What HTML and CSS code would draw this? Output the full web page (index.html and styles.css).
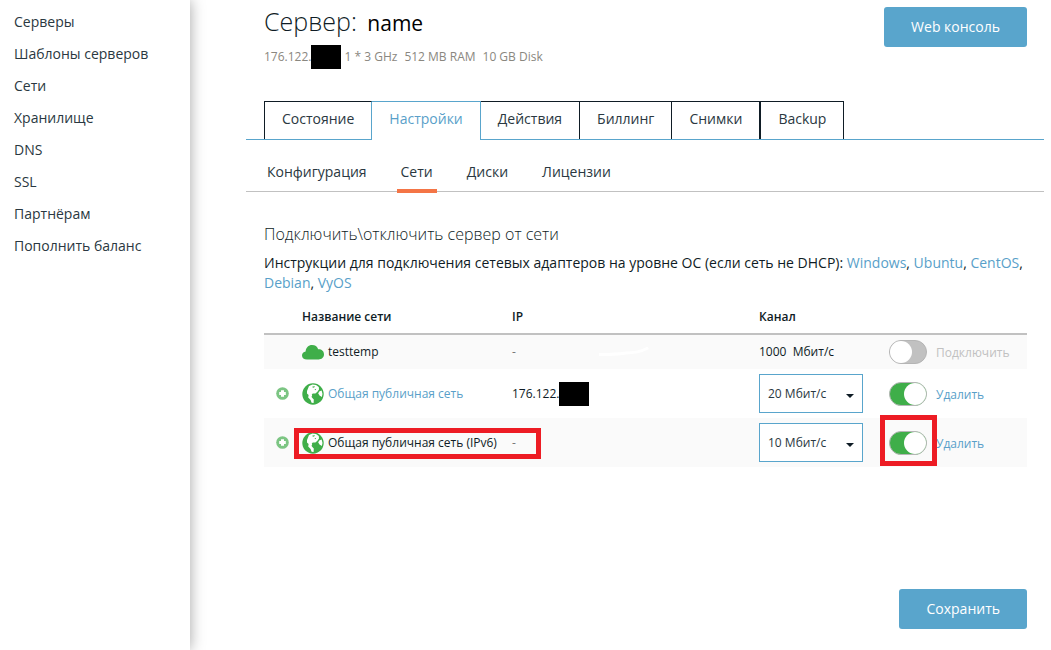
FILE: index.html
```html
<!DOCTYPE html>
<html lang="ru">
<head>
<meta charset="utf-8">
<meta name="viewport" content="width=device-width, initial-scale=1">
<title>Сервер: name</title>
<link rel="stylesheet" href="styles.css">
</head>
<body>
<svg class="sprite" aria-hidden="true">
  <symbol id="globe" viewBox="0 0 22 22">
    <circle cx="11" cy="11" r="10.700" fill="#3fae49"/>
    <path d="M7 3 L10.500 1.600 L14 2 L16.800 4 L17 6.600 L15.400 8.800 L13.400 10.400 L10.800 10.400 L9.800 11.600 L10.200 13 L9.400 13.800 L10.600 15.200 L11.800 16.400 L11.600 20 L9.600 19.800 L8.600 17 L6.200 14.600 L6.600 12 L5 10.600 L5 8 L6 5.600 Z" fill="#fff"/>
    <path d="M17.200 8.400 L19.600 7.600 L20.500 11 L19.800 14 L17.600 12.600 L16.200 10.600 Z" fill="#fff"/>
    <path d="M10.400 3.400 L13 3.200 L12.200 4.600 L10.800 4.800 Z M12.400 6.400 L14.200 5.800 L13.600 7.200 Z" fill="#3fae49"/>
  </symbol>
  <symbol id="plus" viewBox="0 0 13 13">
    <circle cx="6.5" cy="6.5" r="6.3" fill="#7cc583"/>
    <path d="M5 3.2h3V5h1.8v3H8v1.8H5V8H3.2V5H5z" fill="#fff"/>
  </symbol>
</svg>
<div class="page">
  <nav class="sidebar">
    <a href="#">Серверы</a>
    <a href="#">Шаблоны серверов</a>
    <a href="#">Сети</a>
    <a href="#">Хранилище</a>
    <a href="#">DNS</a>
    <a href="#">SSL</a>
    <a href="#">Партнёрам</a>
    <a href="#">Пополнить баланс</a>
  </nav>
  <main class="main">
    <header class="head">
      <div>
        <h1>Сервер: <span class="server-name">name</span></h1>
        <p class="specs"><span>176.122.</span><span class="mask"></span><span class="cpu">1 * 3 GHz</span><span>512 MB RAM</span><span>10 GB Disk</span></p>
      </div>
      <button type="button" class="button">Web консоль</button>
    </header>
    <nav class="tabs">
      <a href="#">Состояние</a>
      <a href="#" class="active">Настройки</a>
      <a href="#">Действия</a>
      <a href="#">Биллинг</a>
      <a href="#">Снимки</a>
      <a href="#">Backup</a>
    </nav>
    <nav class="subtabs">
      <a href="#">Конфигурация</a>
      <a href="#" class="active">Сети</a>
      <a href="#">Диски</a>
      <a href="#">Лицензии</a>
    </nav>
    <form class="content">
      <h2>Подключить\отключить сервер от сети</h2>
      <p class="help">Инструкции для подключения сетевых адаптеров на уровне ОС (если сеть не DHCP): <a href="#">Windows</a>, <a href="#">Ubuntu</a>, <a href="#">CentOS</a>, <a href="#">Debian</a>, <a href="#">VyOS</a></p>
      <table class="networks">
        <colgroup><col class="c-add"><col class="c-name"><col class="c-ip"><col class="c-speed"><col class="c-state"></colgroup>
        <thead>
          <tr><th></th><th>Название сети</th><th>IP</th><th>Канал</th><th></th></tr>
        </thead>
        <tbody>
          <tr class="shaded">
            <td></td>
            <td><div class="net"><svg class="net-icon" viewBox="0 0 22 22"><path d="M5 18.5C2 18.5 0 17 0 14.5c0-2.2 1.600-3.800 3.600-4C4 6.500 6.500 4 10 4c3.200 0 5.400 1.600 6.200 4.200C19.600 8 22 10 22 13.300c0 3.200-2.400 5.200-5.400 5.200z" fill="#3fae49"/></svg>testtemp</div></td>
            <td class="dash">- <svg class="stroke" viewBox="0 0 50 9"><path d="M1 7.500 C12 7.500 20 7 27 6 C37 6 43 4 48 1.500" fill="none" stroke="#fff" stroke-width="3" stroke-linecap="round"/></svg></td>
            <td>1000&nbsp; Мбит/с</td>
            <td><label class="toggle off"><input type="checkbox"><span>Подключить</span></label></td>
          </tr>
          <tr class="tall">
            <td><button type="button" class="add" aria-label="Добавить"><svg viewBox="0 0 13 13"><use href="#plus"/></svg></button></td>
            <td><a class="net" href="#"><svg class="net-icon"><use href="#globe"/></svg>Общая публичная сеть</a></td>
            <td><div class="ip">176.122.<span class="mask"></span></div></td>
            <td><div class="select"><select aria-label="Канал"><option>20 Мбит/с</option></select></div></td>
            <td><label class="toggle"><input type="checkbox" checked><span>Удалить</span></label></td>
          </tr>
          <tr class="tall shaded">
            <td><button type="button" class="add" aria-label="Добавить"><svg viewBox="0 0 13 13"><use href="#plus"/></svg></button></td>
            <td class="marked"><div class="net"><svg class="net-icon"><use href="#globe"/></svg>Общая публичная сеть (IPv6)</div><i class="mark mark-name"></i></td>
            <td class="dash">-</td>
            <td><div class="select"><select aria-label="Канал"><option>10 Мбит/с</option></select></div></td>
            <td class="marked"><label class="toggle"><input type="checkbox" checked><span>Удалить</span></label><i class="mark mark-toggle"></i></td>
          </tr>
        </tbody>
      </table>
      <div class="actions"><button type="submit" class="button">Сохранить</button></div>
    </form>
  </main>
</div>
</body>
</html>
```
FILE: styles.css
```css
* { box-sizing: border-box; }

body {
  margin: 0;
  background: #fff;
  color: #0f1c25;
  font-family: "Open Sans", "Noto Sans", sans-serif;
  font-size: 14px;
  line-height: 20px;
}

a { color: #599fc9; text-decoration: none; }
button, select { font: inherit; }
h1, h2, p { margin: 0; font-weight: 300; }
.sprite { display: none; }

.page { display: flex; min-height: 100vh; }

.sidebar {
  flex: 0 0 190px;
  display: flex;
  flex-direction: column;
  gap: 12px;
  padding: 12px 14px;
  box-shadow: 0 0 14px rgba(0, 0, 0, 0.36);
}
.sidebar a { color: #2a3841; }

.main { flex: 1; min-width: 0; padding: 0 7px 20px 56px; }

.head {
  display: flex;
  justify-content: space-between;
  align-items: flex-start;
  padding: 7px 17px 0 18px;
}
h1 { height: 30px; font-size: 25px; line-height: 28px; }
.server-name { margin-left: 4px; color: #000; font-size: 21px; font-weight: 400; }
.specs {
  display: flex;
  align-items: center;
  gap: 7px;
  height: 24px;
  margin-top: 8px;
  color: #8a8780;
  font-size: 12px;
  font-weight: 400;
}
.specs .mask { margin-left: -7px; }
.specs .cpu { margin-left: -4px; }
.mask { display: inline-block; width: 30px; height: 24px; background: #000; }

.button {
  height: 40px;
  padding: 0 27px;
  border: 0;
  border-radius: 3px;
  background: #59a5cc;
  color: #fff;
}

.tabs {
  display: flex;
  margin-top: 32px;
  padding-left: 18px;
  border-bottom: 1px solid #59a5cc;
}
.tabs a {
  height: 38px;
  padding: 7px 17px;
  border: solid #0f1c25;
  border-width: 1px 1px 0 0;
  color: #2a3841;
}
.tabs a:first-child { border-left-width: 1px; border-right-color: #59a5cc; }
.tabs a:last-child { border-left-width: 1px; }
.tabs .active {
  height: 39px;
  margin-bottom: -1px;
  border-color: #59a5cc;
  background: #fff;
  color: #599fc9;
}

.subtabs {
  display: flex;
  gap: 26px;
  padding: 22px 17px 0;
  border-bottom: 1px solid #c1c1c1;
}
.subtabs a {
  height: 31px;
  margin-bottom: -2px;
  padding: 0 4px;
  border-bottom: 4px solid transparent;
  color: #2a3841;
}
.subtabs .active { border-color: #f47546; }

.content { padding: 30px 17px 0 18px; }
h2 { font-size: 16px; line-height: 24px; }
.help { margin-top: 7px; font-weight: 400; }

.networks { width: 100%; margin-top: 8px; border-collapse: collapse; table-layout: fixed; font-size: 12px; }
.c-add { width: 38px; }
.c-name { width: 210px; }
.c-speed { width: 130px; }
.c-state { width: 138px; }
.networks th {
  height: 33px;
  padding: 0;
  border-bottom: 2px solid #c1c1c1;
  text-align: left;
  font-weight: 600;
}
.networks td { height: 35px; padding: 0; white-space: nowrap; }
.networks .tall td { height: 49px; }
.shaded { background: #fafafa; }
.dash { color: #777; }
.stroke { width: 50px; height: 9px; margin-left: 80px; }

.net { display: flex; align-items: center; gap: 4px; }
.net-icon { width: 22px; height: 22px; }
.ip { display: flex; align-items: center; }
.add { display: block; width: 13px; height: 13px; margin-left: 12px; padding: 0; border: 0; background: none; }
.add svg { display: block; width: 13px; height: 13px; }

.select { position: relative; width: 104px; }
.select select {
  display: block;
  width: 100%;
  height: 39px;
  padding: 0 8px;
  border: 1px solid #59a5cc;
  border-radius: 0;
  background: #fff;
  color: #2a3841;
  appearance: none;
}
.select::after {
  content: "";
  position: absolute;
  top: 20px;
  right: 9px;
  border: 4px solid transparent;
  border-top-color: #0f1c25;
  border-bottom: 0;
  pointer-events: none;
}

.toggle { display: flex; align-items: center; gap: 9px; color: #599fc9; }
.toggle.off { color: #c1c1c1; }
.toggle span { padding-top: 2px; }
.toggle input {
  flex: none;
  display: flex;
  justify-content: flex-end;
  width: 38px;
  height: 24px;
  margin: 0;
  border: 1px solid #b5b5b5;
  border-radius: 12px;
  background: #3fae49;
  appearance: none;
}
.toggle.off input { justify-content: flex-start; background: #c1c1c1; }
.toggle input::before { content: ""; width: 22px; height: 22px; border-radius: 11px; background: #fff; }

.marked { position: relative; }
.mark { position: absolute; border: 5px solid #ed1c24; pointer-events: none; }
.mark-name { top: 10px; left: -8px; width: 247px; height: 31px; }
.mark-toggle { top: -3px; left: -9px; width: 57px; height: 51px; }

.actions { display: flex; justify-content: flex-end; margin-top: 122px; }
```
